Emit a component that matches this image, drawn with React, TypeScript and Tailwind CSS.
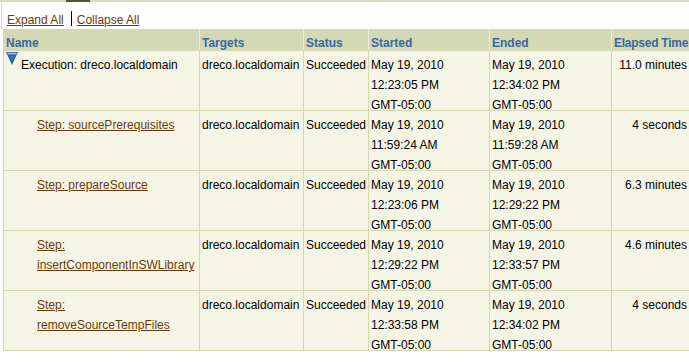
import React from "react";

interface StepRow {
  name: string;
  isStep: boolean;
  target: string;
  status: string;
  started: string[];
  ended: string[];
  elapsed: string;
}

const rows: StepRow[] = [
  {
    name: "Execution: dreco.localdomain",
    isStep: false,
    target: "dreco.localdomain",
    status: "Succeeded",
    started: ["May 19, 2010", "12:23:05 PM", "GMT-05:00"],
    ended: ["May 19, 2010", "12:34:02 PM", "GMT-05:00"],
    elapsed: "11.0 minutes",
  },
  {
    name: "Step: sourcePrerequisites",
    isStep: true,
    target: "dreco.localdomain",
    status: "Succeeded",
    started: ["May 19, 2010", "11:59:24 AM", "GMT-05:00"],
    ended: ["May 19, 2010", "11:59:28 AM", "GMT-05:00"],
    elapsed: "4 seconds",
  },
  {
    name: "Step: prepareSource",
    isStep: true,
    target: "dreco.localdomain",
    status: "Succeeded",
    started: ["May 19, 2010", "12:23:06 PM", "GMT-05:00"],
    ended: ["May 19, 2010", "12:29:22 PM", "GMT-05:00"],
    elapsed: "6.3 minutes",
  },
  {
    name: "Step: insertComponentInSWLibrary",
    isStep: true,
    target: "dreco.localdomain",
    status: "Succeeded",
    started: ["May 19, 2010", "12:29:22 PM", "GMT-05:00"],
    ended: ["May 19, 2010", "12:33:57 PM", "GMT-05:00"],
    elapsed: "4.6 minutes",
  },
  {
    name: "Step: removeSourceTempFiles",
    isStep: true,
    target: "dreco.localdomain",
    status: "Succeeded",
    started: ["May 19, 2010", "12:33:58 PM", "GMT-05:00"],
    ended: ["May 19, 2010", "12:34:02 PM", "GMT-05:00"],
    elapsed: "4 seconds",
  },
];

const headers = ["Name", "Targets", "Status", "Started", "Ended", "Elapsed Time"];

const ExpandedIcon = () => (
  <svg width="12" height="13" viewBox="0 0 12 13" className="shrink-0 mt-[-3px]">
    <polygon points="0,0 12,0 6,13" fill="#2c5a98" />
    <polygon points="1.2,0.8 10.8,0.8 10,2.6 2,2.6" fill="#9db8dc" />
    <polygon points="3,3.4 9,3.4 6,10" fill="#3d6cac" />
  </svg>
);

const cell = "h-[60px] border-b border-r border-[#d4d7b3] pt-[4px] pl-[2px] leading-[20px]";
const head =
  "h-[22px] border-b border-b-[#d4d7b3] border-r border-r-[#eaedd8] pt-[6px] pl-[2px] leading-[16px] font-bold text-[#39699f] whitespace-nowrap";

export default function App() {
  return (
    <div className="w-[689px] h-[364px] overflow-hidden bg-white text-[12px] text-black font-['Liberation_Sans',Arial,sans-serif]">
      <div className="h-[2px] bg-[#d9ddc0] flex">
        <div className="ml-[66px] w-[24px] h-full bg-[#4a5a2b]" />
      </div>
      <div className="h-[27px] border-l border-[#d9ddc0] ml-px pt-[11px] pl-[5px] leading-[14px] flex items-start">
        <a href="#" className="text-[#6b3a0c] underline">Expand All</a>
        <span className="inline-block w-px h-[15px] bg-black ml-[7px] mr-[5px] mt-[-2px]" />
        <a href="#" className="text-[#6b3a0c] underline">Collapse All</a>
      </div>
      <div className="ml-[3px] w-[700px] grid grid-cols-[196px_104px_65px_121px_122px_79px] border-l border-[#d4d7b3] bg-[#f5f5e6]">
        {headers.map((h) => (
          <div
            key={h}
            className={`${head} bg-[#d3d9b4] ${h === "Elapsed Time" ? "tracking-[-0.25px]" : ""}`}
          >
            {h}
          </div>
        ))}
        {rows.map((r) => (
          <React.Fragment key={r.name}>
            <div className={cell}>
              {r.isStep ? (
                <div className="pl-[31px]">
                  <a href="#" className="text-[#6b3a0c] underline">{r.name}</a>
                </div>
              ) : (
                <div className="flex items-start gap-[3px]">
                  <ExpandedIcon />
                  <span>{r.name}</span>
                </div>
              )}
            </div>
            <div className={cell}>{r.target}</div>
            <div className={`${cell} pl-[1px]`}>{r.status}</div>
            <div className={cell}>
              {r.started.map((s) => (
                <div key={s}>{s}</div>
              ))}
            </div>
            <div className={cell}>
              {r.ended.map((s) => (
                <div key={s}>{s}</div>
              ))}
            </div>
            <div className={`${cell} text-right pr-[3px]`}>{r.elapsed}</div>
          </React.Fragment>
        ))}
      </div>
    </div>
  );
}
